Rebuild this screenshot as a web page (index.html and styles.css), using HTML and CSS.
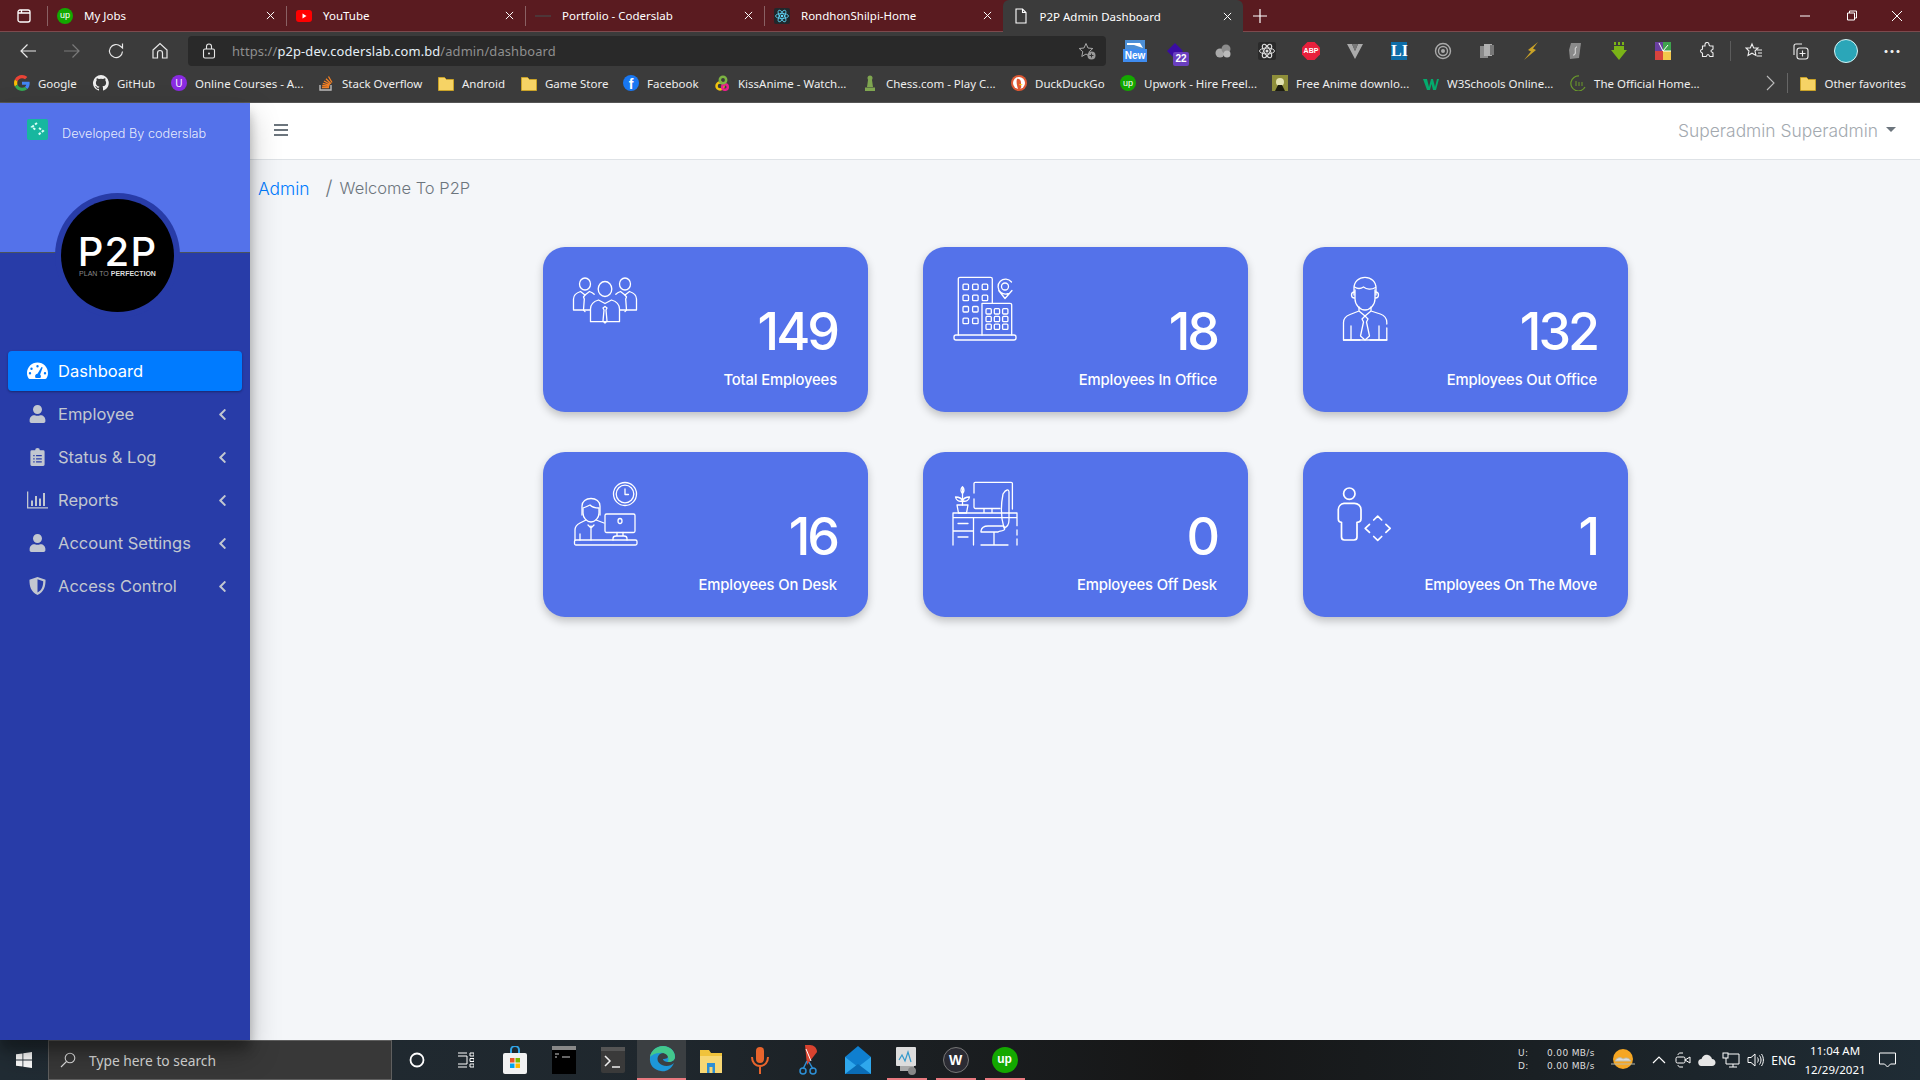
FILE: index.html
```html
<!DOCTYPE html>
<html lang="en">
	<head>
		<meta charset="UTF-8">
		<title>P2P Admin Dashboard</title>
		<link rel="stylesheet" href="styles.css">
	</head>
	<body>
		<svg class="defs" width="0" height="0">
			<symbol id="i_user" viewBox="0 0 448 512"><path fill="currentColor" d="M224 256c70.7 0 128-57.3 128-128S294.7 0 224 0 96 57.3 96 128s57.3 128 128 128zm89.6 32h-16.7c-22.2 10.2-46.9 16-72.9 16s-50.6-5.8-72.9-16h-16.7C60.2 288 0 348.2 0 422.4V464c0 26.5 21.5 48 48 48h352c26.5 0 48-21.5 48-48v-41.6c0-74.2-60.2-134.4-134.4-134.4z"/></symbol>
			<symbol id="i_left" viewBox="0 0 320 512"><path fill="currentColor" d="M34.52 239.03L228.87 44.69c9.37-9.37 24.57-9.37 33.94 0l22.67 22.67c9.36 9.36 9.37 24.52.04 33.9L131.49 256l154.02 154.75c9.34 9.38 9.32 24.54-.04 33.9l-22.67 22.67c-9.37 9.37-24.57 9.37-33.94 0L34.52 272.97c-9.37-9.37-9.37-24.57 0-33.94z"/></symbol>
			<symbol id="i_close" viewBox="0 0 10 10"><path d="M1 1l8 8M9 1l-8 8" fill="none" stroke="currentColor" stroke-width="1.1"/></symbol>
			<symbol id="i_folder" viewBox="0 0 16 16"><path d="M.5 2.500h6l2 2h7v11H.5z" fill="#f6d365" stroke="#c9a227"/></symbol>
		</svg>

		<!-- browser tabs -->
		<div class="tabbar">
			<div class="tab_app">
				<svg width="14" height="14" viewBox="0 0 14 14"><rect x="1" y="1" width="12" height="12" rx="2" fill="none" stroke="#fff" stroke-width="1.3"/><path d="M1 4h12M4.500 1v3" stroke="#fff" stroke-width="1.3"/></svg>
			</div>
			<div class="tab">
				<span class="fav fav_up">up</span><span class="tab_name">My Jobs</span>
				<svg class="tab_x"><use href="#i_close"/></svg>
			</div>
			<div class="tab">
				<svg class="fav" viewBox="0 0 16 16"><rect y="2" width="16" height="12" rx="3" fill="#f00"/><path d="M6.500 5.500v5l4-2.500z" fill="#fff"/></svg>
				<span class="tab_name">YouTube</span>
				<svg class="tab_x"><use href="#i_close"/></svg>
			</div>
			<div class="tab">
				<svg class="fav" viewBox="0 0 16 16"><path d="M0 8h16" stroke="#4a4040" stroke-width="1.5"/></svg>
				<span class="tab_name">Portfolio - Coderslab</span>
				<svg class="tab_x"><use href="#i_close"/></svg>
			</div>
			<div class="tab tab_before">
				<svg class="fav" viewBox="0 0 16 16"><rect width="16" height="16" rx="2" fill="#20282c"/><g fill="none" stroke="#61dafb" stroke-width=".8"><ellipse cx="8" cy="8" rx="6.500" ry="2.500"/><ellipse cx="8" cy="8" rx="6.500" ry="2.500" transform="rotate(60 8 8)"/><ellipse cx="8" cy="8" rx="6.500" ry="2.500" transform="rotate(120 8 8)"/></g><circle cx="8" cy="8" r="1.3" fill="#61dafb"/></svg>
				<span class="tab_name">RondhonShilpi-Home</span>
				<svg class="tab_x"><use href="#i_close"/></svg>
			</div>
			<div class="tab tab_active">
				<svg class="fav" viewBox="0 0 16 16"><path d="M3 1h6.500L13 4.500V15H3zM9.500 1v3.500H13" fill="none" stroke="#fff" stroke-width="1.1"/></svg>
				<span class="tab_name">P2P Admin Dashboard</span>
				<svg class="tab_x"><use href="#i_close"/></svg>
			</div>
			<svg class="tab_plus" width="16" height="16" viewBox="0 0 16 16"><path d="M8 1v14M1 8h14" stroke="#fff" stroke-width="1.2"/></svg>
			<div class="win_btns">
				<svg width="46" height="12" viewBox="0 0 46 12"><path d="M18 6h10" stroke="#fff"/></svg>
				<svg width="46" height="12" viewBox="0 0 46 12"><path d="M19.500 3h7v7h-7zM21.500 3V1h7v7h-2" fill="none" stroke="#fff"/></svg>
				<svg width="46" height="12" viewBox="0 0 46 12"><path d="M18 1l10 10M28 1L18 11" stroke="#fff"/></svg>
			</div>
		</div>

		<!-- address row -->
		<div class="toolbar">
			<div class="tool"><svg width="18" height="18" viewBox="0 0 18 18"><path d="M17 9H2M8.500 2.500L2 9l6.500 6.500" fill="none" stroke="#e8e8e8" stroke-width="1.2"/></svg></div>
			<div class="tool"><svg width="18" height="18" viewBox="0 0 18 18"><path d="M1 9h15M9.500 2.500L16 9l-6.500 6.500" fill="none" stroke="#7a7a7a" stroke-width="1.2"/></svg></div>
			<div class="tool"><svg width="18" height="18" viewBox="0 0 18 18"><path d="M15.500 9.500a6.500 6.500 0 1 1-2-5.200L15.500 6V1.500" fill="none" stroke="#e8e8e8" stroke-width="1.2"/></svg></div>
			<div class="tool"><svg width="18" height="18" viewBox="0 0 18 18"><path d="M2 8l7-6.500L16 8v8h-4.500v-5a2.500 2.500 0 0 0-5 0v5H2z" fill="none" stroke="#e8e8e8" stroke-width="1.2"/></svg></div>
			<div class="address">
				<svg class="lock" width="14" height="16" viewBox="0 0 14 16"><rect x="1.500" y="6" width="11" height="9" rx="1.5" fill="none" stroke="#e8e8e8" stroke-width="1.1"/><path d="M4.500 6V3.500a2.500 2.500 0 0 1 5 0V6" fill="none" stroke="#e8e8e8" stroke-width="1.1"/><circle cx="7" cy="10.500" r="1" fill="#e8e8e8"/></svg>
				<span class="url"><span class="url_dim">https://</span><span class="url_host">p2p-dev.coderslab.com.bd</span><span class="url_dim">/admin/dashboard</span></span>
				<svg class="addr_star" width="18" height="18" viewBox="0 0 18 18"><path d="M8 1.500l2 4.500 4.800.5-3.600 3.200 1 4.800L8 12l-4.200 2.500 1-4.800L1.200 6.500 6 6z" fill="none" stroke="#aaa"/><circle cx="13.500" cy="13.500" r="4" fill="#999"/><path d="M13.500 11.500v4M11.500 13.500h4" stroke="#333"/></svg>
			</div>
			<div class="exts">
				<div class="tool">
					<span class="ext_new"><svg width="20" height="11" viewBox="0 0 20 11"><rect width="20" height="11" fill="#4c8fd6"/><path d="M2 3h13l3 5-9-3H2z" fill="#fff"/></svg><b>New</b></span>
				</div>
				<div class="tool">
					<span class="ext_count"><svg width="16" height="16" viewBox="0 0 16 16"><path d="M8 0l8 8-8 8-8-8z" fill="#3a0ca3"/></svg><b>22</b></span>
				</div>
				<div class="tool"><svg width="18" height="16" viewBox="0 0 18 16"><circle cx="6" cy="10" r="4.500" fill="#aaa"/><circle cx="12" cy="6" r="4.500" fill="#8c8c8c"/><circle cx="13" cy="11" r="3.500" fill="#bbb"/></svg></div>
				<div class="tool"><svg width="18" height="18" viewBox="0 0 18 18"><rect width="18" height="18" rx="2" fill="#2a2a2a"/><g fill="none" stroke="#ddd"><ellipse cx="9" cy="9" rx="7.500" ry="3"/><ellipse cx="9" cy="9" rx="7.500" ry="3" transform="rotate(60 9 9)"/><ellipse cx="9" cy="9" rx="7.500" ry="3" transform="rotate(120 9 9)"/></g><circle cx="9" cy="9" r="1.5" fill="#ddd"/></svg></div>
				<div class="tool"><span class="ext_abp">ABP</span></div>
				<div class="tool"><svg width="16" height="16" viewBox="0 0 16 16"><path d="M0 1h5l3 7 3-7h5L8 16z" fill="#aaa"/><path d="M5 1l3 7 3-7" fill="#777"/></svg></div>
				<div class="tool"><span class="ext_li">LI</span></div>
				<div class="tool"><svg width="18" height="18" viewBox="0 0 18 18"><g fill="none" stroke="#aaa"><circle cx="9" cy="9" r="7.500" stroke-width="1.4"/><circle cx="9" cy="9" r="4.500" stroke-width="1.4"/></g><circle cx="9" cy="9" r="2" fill="#aaa"/></svg></div>
				<div class="tool"><svg width="16" height="16" viewBox="0 0 16 16"><rect x="1" y="3" width="8" height="12" fill="#8a8a8a"/><rect x="5" y="1" width="8" height="12" fill="#b0b0b0"/><rect x="11" y="2" width="4" height="10" fill="#777"/></svg></div>
				<div class="tool"><svg width="14" height="18" viewBox="0 0 14 18"><path d="M14 0L4 8l3 1.500L0 18l12-10-3-1.500z" fill="#c9a227"/></svg></div>
				<div class="tool"><svg width="14" height="18" viewBox="0 0 14 18"><path d="M3 1h10l-2 15-9 1-1-9z" fill="#8a8a8a"/><path d="M9 5C6 5 8 9 7 12c-.3 1-1 1-2 1" fill="none" stroke="#eee"/></svg></div>
				<div class="tool"><svg width="16" height="18" viewBox="0 0 16 18"><path d="M3 0h2v3H3zM7 0h2v3H7zM11 0h2v3h-2zM3 4h10v4h3l-8 10L0 8h3z" fill="#7ab317"/></svg></div>
				<div class="tool"><svg width="16" height="18" viewBox="0 0 16 18"><rect width="8" height="9" fill="#6a3fa0"/><rect x="8" width="8" height="9" fill="#3fa34d"/><rect y="9" width="8" height="9" fill="#d9433d"/><rect x="8" y="9" width="8" height="9" fill="#f3c64b"/><path d="M8 9L4 1M8 9l5-6M8 9h8" stroke="#fff"/></svg></div>
				<div class="tool"><svg width="18" height="18" viewBox="0 0 18 18"><path d="M7 2.500a2 2 0 0 1 4 0c0 1 .5 1.500 1.500 1.500H15v3c0 1-2 .5-2 2s2 1 2 2v3.500h-3c-1 0-.5-2-2-2s-1 2-2 2H4.500v-3c0-1-2-.5-2-2.500s2-1 2-2V4H7z" fill="none" stroke="#eee" stroke-width="1.1"/></svg></div>
				<span class="tool_sep"></span>
				<div class="tool"><svg width="18" height="18" viewBox="0 0 18 18"><path d="M7 2l1.700 4h4.300l-3 3 1 4.500L7 11.200 3 13.500 4 9 1 6h4.300z" fill="none" stroke="#eee" stroke-width="1.1"/><path d="M12 8h5M13 11h4M12 14h5" stroke="#eee" stroke-width="1.1"/></svg></div>
				<div class="tool tool_shift"><svg width="18" height="18" viewBox="0 0 18 18"><path d="M3 13V4a2 2 0 0 1 2-2h6" fill="none" stroke="#eee" stroke-width="1.1"/><rect x="6" y="6" width="11" height="11" rx="2.5" fill="none" stroke="#eee" stroke-width="1.1"/><path d="M11.500 8.500v6M8.500 11.500h6" stroke="#eee" stroke-width="1.1"/></svg></div>
				<div class="tool tool_shift"><span class="avatar"></span></div>
				<div class="tool tool_dots">···</div>
			</div>
		</div>

		<!-- favourites row -->
		<div class="bookmarks">
			<div class="mark"><svg class="mark_ic" viewBox="0 0 48 48"><path fill="#EA4335" d="M24 9.500c3.540 0 6.710 1.220 9.210 3.600l6.850-6.850C35.900 2.380 30.470 0 24 0 14.620 0 6.510 5.380 2.560 13.220l7.980 6.190C12.430 13.720 17.740 9.500 24 9.500z"/><path fill="#4285F4" d="M46.980 24.550c0-1.570-.15-3.090-.38-4.550H24v9.020h12.940c-.58 2.960-2.260 5.480-4.780 7.180l7.730 6c4.510-4.180 7.090-10.360 7.090-17.650z"/><path fill="#FBBC05" d="M10.530 28.590c-.48-1.450-.76-2.990-.76-4.590s.27-3.140.76-4.590l-7.980-6.190C.92 16.460 0 20.120 0 24c0 3.880.92 7.540 2.560 10.780l7.970-6.190z"/><path fill="#34A853" d="M24 48c6.480 0 11.930-2.130 15.890-5.810l-7.730-6c-2.150 1.450-4.920 2.300-8.160 2.300-6.260 0-11.570-4.220-13.470-9.910l-7.980 6.190C6.510 42.620 14.620 48 24 48z"/></svg>Google</div>
			<div class="mark"><svg class="mark_ic" viewBox="0 0 16 16"><path fill="#eee" d="M8 0a8 8 0 0 0-2.500 15.600c.4.100.5-.2.500-.4v-1.400c-2.200.5-2.700-1-2.700-1-.4-.9-.9-1.200-.9-1.200-.7-.5.100-.5.100-.5.800.1 1.200.8 1.200.8.700 1.200 1.900.9 2.300.7.100-.5.300-.9.500-1.100-1.800-.2-3.600-.9-3.600-4 0-.9.300-1.600.8-2.100-.1-.2-.4-1 .1-2.100 0 0 .7-.2 2.200.8a7.500 7.500 0 0 1 4 0c1.500-1 2.200-.8 2.200-.8.400 1.100.2 1.900.1 2.100.5.600.8 1.300.8 2.100 0 3.100-1.900 3.700-3.700 3.900.3.300.6.800.6 1.500v2.200c0 .2.100.5.600.4A8 8 0 0 0 8 0z"/></svg>GitHub</div>
			<div class="mark"><span class="mark_ic ic_udemy">U</span>Online Courses - A...</div>
			<div class="mark"><svg class="mark_ic" viewBox="0 0 16 16"><path d="M2 10v5h11v-5" fill="none" stroke="#bcbbbb" stroke-width="1.4"/><path d="M4 12.500h7M4.200 10.500l7 .6M4.800 8.300l6.800 1.800M6 6l6 3.300M8 3.700l5 5M10.500 1.500l3.500 6" stroke="#f48024" stroke-width="1.3"/></svg>Stack Overflow</div>
			<div class="mark"><svg class="mark_ic"><use href="#i_folder"/></svg>Android</div>
			<div class="mark"><svg class="mark_ic"><use href="#i_folder"/></svg>Game Store</div>
			<div class="mark"><span class="mark_ic ic_fb">f</span>Facebook</div>
			<div class="mark"><svg class="mark_ic" viewBox="0 0 16 16"><g fill="none" stroke-width="2.5"><circle cx="6" cy="11" r="3.500" stroke="#f1c40f"/><circle cx="11" cy="12" r="2.800" stroke="#e91e8c"/><circle cx="9" cy="5" r="3.200" stroke="#7cb342"/></g></svg>KissAnime - Watch...</div>
			<div class="mark"><svg class="mark_ic" viewBox="0 0 16 16"><circle cx="8" cy="3" r="2.500" fill="#7fa650"/><path d="M6 5h4l1 7H5zM3 12.500h10V16H3z" fill="#7fa650"/></svg>Chess.com - Play C...</div>
			<div class="mark"><svg class="mark_ic" viewBox="0 0 16 16"><circle cx="8" cy="8" r="8" fill="#de5833"/><circle cx="8" cy="8" r="6" fill="#fff"/><path d="M6 4c3-1 4 2 4 4s1 5-1 6H7C6 11 5 7 6 4z" fill="#de5833"/><path d="M8 9h4l-3 1.500z" fill="#fdd20a"/></svg>DuckDuckGo</div>
			<div class="mark"><span class="mark_ic fav_up">up</span>Upwork - Hire Freel...</div>
			<div class="mark"><svg class="mark_ic" viewBox="0 0 16 16"><rect width="16" height="16" fill="#8f8f3a"/><circle cx="8" cy="7" r="4" fill="#e3e3b0"/><path d="M3 16l3-6h4l3 6z" fill="#1c1c10"/></svg>Free Anime downlo...</div>
			<div class="mark"><svg class="mark_ic" viewBox="0 0 16 16"><path d="M0 4h4l2 8 2-8h2l2 8 2-8h2l-3 11h-3L8.500 9 7 15H4z" fill="#04aa6d"/></svg>W3Schools Online...</div>
			<div class="mark"><svg class="mark_ic" viewBox="0 0 16 16"><path d="M9 1a7.500 7.500 0 1 0 6 11" fill="none" stroke="#6a9a2b" stroke-width="1.2"/><path d="M6 6v5M9 7v4M12 7v4" stroke="#6a9a2b"/></svg>The Official Home...</div>
			<div class="mark_end">
				<svg width="9" height="16" viewBox="0 0 9 16"><path d="M1 1l7 7-7 7" fill="none" stroke="#bbb" stroke-width="1.1"/></svg>
				<span class="mark_sep"></span>
				<div class="mark"><svg class="mark_ic"><use href="#i_folder"/></svg>Other favorites</div>
			</div>
		</div>

		<div class="app">
			<aside class="sidebar">
				<div class="brand">
					<svg class="brand_ic" viewBox="0 0 21 21"><rect width="21" height="21" rx="2" fill="#17b79f"/><path d="M10 4L5 8l4 3M12 9l4 3-5 4" fill="none" stroke="#d8fff6" stroke-width="2" stroke-dasharray="2.500 1.500"/></svg>
					<span class="brand_text">Developed By coderslab</span>
				</div>
				<div class="logo">
					<div class="logo_in">
						<span class="logo_big">P2P</span>
						<span class="logo_small">PLAN TO <b>PERFECTION</b></span>
					</div>
				</div>
				<ul class="nav">
					<li class="nav_item active">
						<svg class="nav_ic" viewBox="0 0 21 17"><path fill="#fff" fill-rule="evenodd" d="M10.500 0C4.700 0 0 4.700 0 10.500c0 1.900.5 3.800 1.500 5.300.3.500.8.700 1.300.7h15.400c.5 0 1-.2 1.300-.7 1-1.500 1.500-3.400 1.500-5.300C21 4.700 16.300 0 10.500 0zM10.500 2.500a1.200 1.200 0 1 1 0 2.400 1.200 1.200 0 0 1 0-2.400zM4.500 5a1.200 1.200 0 1 1 0 2.400A1.200 1.200 0 0 1 4.500 5zM3 9.500a1.200 1.200 0 1 1 0 2.400 1.200 1.200 0 0 1 0-2.400zM18 9.500a1.200 1.200 0 1 1 0 2.400 1.200 1.200 0 0 1 0-2.400zM14.500 4.500l1.200.4-2.600 7c.5.500.8 1.100.8 1.800 0 .7-.2 1.300-.6 1.800H8.700c-.4-.5-.6-1.100-.6-1.800 0-1.300 1.100-2.400 2.400-2.400z"/></svg>
						<span>Dashboard</span>
					</li>
					<li class="nav_item">
						<svg class="nav_ic"><use href="#i_user"/></svg>
						<span>Employee</span>
						<svg class="nav_arrow"><use href="#i_left"/></svg>
					</li>
					<li class="nav_item">
						<svg class="nav_ic" viewBox="0 0 21 19"><path fill="currentColor" fill-rule="evenodd" d="M4.500 2.500H8a2.500 2.500 0 0 1 5 0h3.500a1.500 1.500 0 0 1 1.500 1.500v13.500a1.500 1.500 0 0 1-1.500 1.500h-12A1.500 1.500 0 0 1 3 17.500V4a1.500 1.500 0 0 1 1.500-1.500zM6 7.500v1.300h1.500V7.500zM9 7.500v1.300h6V7.500zM6 10.800v1.300h1.500v-1.300zM9 10.800v1.300h6v-1.300zM6 14v1.300h1.500V14zM9 14v1.300h6V14z"/></svg>
						<span>Status &amp; Log</span>
						<svg class="nav_arrow"><use href="#i_left"/></svg>
					</li>
					<li class="nav_item">
						<svg class="nav_ic" viewBox="0 0 21 17"><path fill="currentColor" d="M0 0h1.300v15.700H21V17H0zM4 9h2v5.500H4zM8 4.500h2v10H8zM12 7h2v7.500h-2zM16 1.500h2v13h-2z"/></svg>
						<span>Reports</span>
						<svg class="nav_arrow"><use href="#i_left"/></svg>
					</li>
					<li class="nav_item">
						<svg class="nav_ic"><use href="#i_user"/></svg>
						<span>Account Settings</span>
						<svg class="nav_arrow"><use href="#i_left"/></svg>
					</li>
					<li class="nav_item">
						<svg class="nav_ic" viewBox="0 0 21 19"><path fill="currentColor" fill-rule="evenodd" d="M10.500 0l8.500 3c0 7-1.500 13-8.500 16C3.500 16 2 10 2 3zM10.500 2.500V16.300c4.800-2.400 6-6.800 6-11.800z"/></svg>
						<span>Access Control</span>
						<svg class="nav_arrow"><use href="#i_left"/></svg>
					</li>
				</ul>
			</aside>

			<main class="main">
				<header class="topbar">
					<svg class="burger" width="14" height="12" viewBox="0 0 14 12"><path d="M0 1h14M0 6h14M0 11h14" stroke="#6c757d" stroke-width="2"/></svg>
					<span class="user">Superadmin Superadmin</span>
					<span class="caret"></span>
				</header>
				<div class="crumbs">
					<a class="crumb_link" href="javascript:;">Admin</a>
					<span class="crumb_sep">/</span>
					<span class="crumb_now">Welcome To P2P</span>
				</div>
				<div class="cards">
					<div class="card">
						<svg class="card_ic" viewBox="0 0 72 72">
							<ellipse cx="15" cy="10" rx="5.500" ry="6"/><ellipse cx="55" cy="10" rx="5.500" ry="6"/><ellipse cx="35" cy="15" rx="6.800" ry="7.500"/>
							<path d="M20 36H3.500V25c0-4 2.500-6 7-7.500l4.500 3.500 4.500-3.500c2 .7 3.500 1.500 4.700 2.700"/>
							<path d="M50 36h16.500V25c0-4-2.500-6-7-7.500L55 21l-4.500-3.500c-2 .7-3.500 1.500-4.700 2.700"/>
							<path d="M20.500 47.700V35c0-4.500 3-7.500 8-9l6.500 3.500 6.500-3.500c5 1.500 8 4.500 8 9v12.700z"/>
							<path d="M35 32.500l-2 1.500 1 2-1 11 2 2 2-2-1-11 1-2zM15 21l-1.500 2 .8 2-.8 11 1.500 1.500M55 21l1.500 2-.8 2 .8 11-1.500 1.500"/>
						</svg>
						<div class="card_num">149</div>
						<div class="card_label">Total Employees</div>
					</div>
					<div class="card">
						<svg class="card_ic" viewBox="0 0 72 72">
							<path d="M8.300 61V5a1.700 1.700 0 0 1 1.700-1.700h30.600A1.700 1.700 0 0 1 42.300 5v24.300M32 29.300h28a1.700 1.700 0 0 1 1.700 1.700v30M32 29.300V61"/>
							<rect x="4" y="61" width="62" height="5" rx="2"/>
							<rect x="13" y="10.200" width="5.500" height="5.500" rx="1"/><rect x="22.600" y="10.200" width="5.500" height="5.500" rx="1"/><rect x="32.200" y="10.200" width="5.500" height="5.500" rx="1"/>
							<rect x="13" y="21.200" width="5.500" height="5.500" rx="1"/><rect x="22.600" y="21.200" width="5.500" height="5.500" rx="1"/><rect x="32.200" y="21.200" width="5.500" height="5.500" rx="1"/>
							<rect x="13" y="32.500" width="5.500" height="5.500" rx="1"/><rect x="22.600" y="32.500" width="5.500" height="5.500" rx="1"/>
							<rect x="13" y="44.200" width="5.500" height="5.500" rx="1"/><rect x="22.600" y="44.200" width="5.500" height="5.500" rx="1"/>
							<rect x="36" y="34.700" width="5.300" height="5.300" rx="1"/><rect x="44.300" y="34.700" width="5.300" height="5.300" rx="1"/><rect x="52.600" y="34.700" width="5.300" height="5.300" rx="1"/>
							<rect x="36" y="42.400" width="5.300" height="5.300" rx="1"/><rect x="44.300" y="42.400" width="5.300" height="5.300" rx="1"/><rect x="52.600" y="42.400" width="5.300" height="5.300" rx="1"/>
							<rect x="36" y="50.100" width="5.300" height="5.300" rx="1"/><rect x="44.300" y="50.100" width="5.300" height="5.300" rx="1"/><rect x="52.600" y="50.100" width="5.300" height="5.300" rx="1"/>
							<path d="M61.500 8a7.500 7.500 0 1 0 .5 8.500L55 24.500l-6.300-8"/><circle cx="55" cy="12.500" r="3.500"/>
						</svg>
						<div class="card_num">18</div>
						<div class="card_label">Employees In Office</div>
					</div>
					<div class="card">
						<svg class="card_ic" viewBox="0 0 72 72">
							<path d="M24 21V14C24 7.500 29 3.300 35 3.300S46 7.500 46 14v7"/>
							<path d="M24.500 13c3 2 6 2 9 0 3 2.500 8 3 12 .5M25 16v9c0 6 5 11 10 11s10-5 10-11v-9"/>
							<path d="M24.500 18a3 3 0 0 0 0 6M45.500 18a3 3 0 0 1 0 6"/>
							<path d="M29 33v4l6 5 6-5v-4M29 37l-9 3.500c-4 1.500-6.500 4-6.500 8V66h43.300V54M56.800 50v-1.500c0-4-2.500-7-6.500-8.500L41 37"/>
							<path d="M35 42l-3 3 1.500 3-3 14 4.500 4 4.500-4-3-14 1.500-3zM21 52v14M49 52v14M13.500 66H30M40 66h16.800"/>
						</svg>
						<div class="card_num">132</div>
						<div class="card_label">Employees Out Office</div>
					</div>
					<div class="card">
						<svg class="card_ic" viewBox="0 0 72 72">
							<circle cx="55" cy="15" r="11.500"/><circle cx="55" cy="15" r="8.800"/><path d="M55 10v5.500h3.500"/>
							<path d="M12 36v-9c0-4.500 4-7.500 9-7.500s9 3 9 7.500v9"/>
							<path d="M13 30v4c0 5 4 9 8 9s8-4 8-9v-4M13 29c3-1 5-2 7-3 2 2 5 3 9 3"/>
							<path d="M16 41l-6 3c-3 1.500-5 3.500-5 7v10M26 41l8 3M21 47v14M18 46l3 3 3-3M10 55v6"/>
							<rect x="35" y="35" width="30" height="18.500" rx="1.5"/><ellipse cx="50" cy="42" rx="2" ry="2.500"/>
							<path d="M47 53.500V57h6v-3.500M43 61v-1.500c0-1 1-2.500 3-2.500h8c2 0 3 1.500 3 2.500V61"/>
							<rect x="4.500" y="61" width="62.500" height="5" rx="1.5"/>
						</svg>
						<div class="card_num">16</div>
						<div class="card_label">Employees On Desk</div>
					</div>
					<div class="card">
						<svg class="card_ic" viewBox="0 0 72 72">
							<path d="M24 14V4.500a1.200 1.200 0 0 1 1.200-1.200h36a1.200 1.200 0 0 1 1.200 1.200V30M24 20v8a1.500 1.500 0 0 0 1.500 1.500H50"/>
							<path d="M34 30v4M42 30v4M3 34h64v4.700H3zM3 38.700V66M23.500 38.700V66M3 52h20.500M67 38.700v8M67 51v5M67 60v6"/>
							<path d="M8 44.500h10M8 58h10"/>
							<path d="M12.500 26v-16M12.500 7.700c-2 2-2 5 0 7 2-2 2-5 0-7zM12.500 22c-1-3-4-4-7-4 .5 3 3 5 7 4zM12.500 22c1-3 4-4 7-4-.5 3-3 5-7 4z"/>
							<path d="M7 26h11l-1.500 8h-8z"/>
							<path d="M53 15c3-5 6-5 6-2v28c0 4-2 7-5 8V49c-3-10-3-24-1-34z"/>
							<path d="M31 52c.5-3 3-5 7-5h15c1.500 0 2.500 3 1 4-3 1.500-5 1-6 2H31zM44 53v13M31 66h27"/>
						</svg>
						<div class="card_num">0</div>
						<div class="card_label">Employees Off Desk</div>
					</div>
					<div class="card">
						<svg class="card_ic card_ic_bold" viewBox="0 0 72 72">
							<circle cx="19.300" cy="14.700" r="5.700"/>
							<path d="M14 24.300h10.500a6.500 6.500 0 0 1 6.500 6.500v9c0 2-1.500 3.500-4 3.500v14.700a3 3 0 0 1-3 3H14.500a3 3 0 0 1-3-3V43.300c-2 0-3.200-1.500-3.200-3.500v-9a6.500 6.500 0 0 1 5.700-6.500z"/>
							<path d="M43.700 41l4-3.800 4 3.800M43.700 57.500l4 3.800 4-3.800M39.500 45.300l-4.300 4 4.300 4M55.900 45.300l4.300 4-4.300 4"/>
						</svg>
						<div class="card_num">1</div>
						<div class="card_label">Employees On The Move</div>
					</div>
				</div>
			</main>
		</div>

		<!-- windows taskbar -->
		<footer class="taskbar">
			<div class="start">
				<svg width="16" height="16" viewBox="0 0 16 16"><path d="M0 2.300l6.500-.9V7.600H0zM7.300 1.300L16 0v7.600H7.300zM0 8.400h6.500v6.200L0 13.700zM7.300 8.400H16V16l-8.700-1.200z" fill="#fff"/></svg>
			</div>
			<div class="search">
				<svg width="16" height="16" viewBox="0 0 16 16"><circle cx="10" cy="6" r="4.800" fill="none" stroke="#ddd" stroke-width="1.1"/><path d="M6.500 9.500L1 15" stroke="#ddd" stroke-width="1.1"/></svg>
				<span>Type here to search</span>
			</div>
			<div class="task"><svg width="16" height="16" viewBox="0 0 16 16"><circle cx="8" cy="8" r="6.500" fill="none" stroke="#fff" stroke-width="1.8"/></svg></div>
			<div class="task"><svg width="16" height="16" viewBox="0 0 16 16"><path d="M0 1h9M0 15h9M0 4h9v8H0M12 1h4v3h-4zM12 6.500h4v3h-4zM12 12h4v3h-4z" fill="none" stroke="#fff"/></svg></div>
			<div class="task"><svg width="24" height="28" viewBox="0 0 24 28"><path d="M8 8V4a4 4 0 0 1 8 0v4" fill="none" stroke="#30a5e8" stroke-width="2"/><rect y="7" width="24" height="21" rx="2" fill="#f2f2f2"/><rect x="7" y="12" width="4.500" height="4.500" fill="#e8552b"/><rect x="12.500" y="12" width="4.500" height="4.500" fill="#7fba00"/><rect x="7" y="17.500" width="4.500" height="4.500" fill="#00a4ef"/><rect x="12.500" y="17.500" width="4.500" height="4.500" fill="#ffb900"/></svg></div>
			<div class="task"><svg width="24" height="28" viewBox="0 0 24 28"><rect width="24" height="28" fill="#000"/><rect width="24" height="4" fill="#888"/><path d="M3 8h4M3 11h2M10 11h8" stroke="#ccc"/></svg></div>
			<div class="task"><svg width="24" height="26" viewBox="0 0 24 26"><rect width="24" height="26" rx="2" fill="#3a3a3a"/><rect width="24" height="4" fill="#555"/><path d="M4 9l5 5-5 5M11 20h8" fill="none" stroke="#eee" stroke-width="1.5"/></svg></div>
			<div class="task task_on"><svg width="28" height="28" viewBox="0 0 28 28"><path d="M26 18c-3 7-9 9-13 8C6 25 1 20 2 12 3 6 8 1 15 1c7 0 12 5 12 11 0 3-3 5-7 5-2 0-5-1-5-3 3 0 6-1 5-4-1-2-5-3-8-1-4 3-3 9 2 11 4 2 9 1 12-2z" fill="#1d97d8"/><path d="M2 12C3 6 8 1 15 1c7 0 12 5 12 11 0 3-3 5-7 5 2-6-3-10-8-9-5 0-8 2-10 4z" fill="#43c88c"/></svg></div>
			<div class="task"><svg width="24" height="26" viewBox="0 0 24 26"><path d="M1 3h9l2 3h11v8H1z" fill="#f0c33c"/><rect x="1" y="9" width="22" height="17" fill="#f7d774"/><rect x="8" y="16" width="8" height="10" fill="#2d8fd5"/><rect x="10.500" y="20" width="3" height="6" fill="#f7d774"/></svg></div>
			<div class="task"><svg width="20" height="28" viewBox="0 0 20 28"><rect x="6" y="1" width="8" height="16" rx="4" fill="#e8642c"/><path d="M2 11c0 5 3 9 8 9s8-4 8-9M10 20v8" fill="none" stroke="#e8642c" stroke-width="2"/></svg></div>
			<div class="task"><svg width="20" height="30" viewBox="0 0 20 30"><path d="M6 0h5c4 0 7 3 7 7L8 20z" fill="#d9432f"/><path d="M7 4l5 12" stroke="#fff"/><path d="M8 16L4 24M10 17l4 7" stroke="#2d8fd5" stroke-width="1.5"/><circle cx="4" cy="26" r="3" fill="none" stroke="#2d8fd5" stroke-width="1.5"/><circle cx="14" cy="26" r="3" fill="none" stroke="#2d8fd5" stroke-width="1.5"/></svg></div>
			<div class="task"><svg width="26" height="28" viewBox="0 0 26 28"><path d="M13 0l13 11v17H0V11z" fill="#0f7fd0"/><path d="M0 11l13 10 13-10v17H0z" fill="#2fa7ec"/><path d="M0 28l13-10 13 10z" fill="#0a6cb6"/></svg></div>
			<div class="task task_open"><svg width="26" height="30" viewBox="0 0 26 30"><rect x="2" y="2" width="20" height="19" rx="1" fill="#ddd"/><path d="M5 15l3-5 3 6 3-9 3 10" fill="none" stroke="#39c" stroke-width="1.2"/><rect x="6" y="21" width="14" height="5" fill="#aaa"/><circle cx="18" cy="26" r="4" fill="#888"/></svg></div>
			<div class="task task_open"><span class="ic_w">W</span></div>
			<div class="task task_open"><span class="ic_up">up</span></div>

			<div class="tray">
				<div class="netspeed">
					<span>U:</span><span>0.00 MB/s</span>
					<span>D:</span><span>0.00 MB/s</span>
				</div>
				<svg class="tray_weather" width="24" height="24" viewBox="0 0 24 24"><circle cx="12" cy="11" r="10" fill="#f5a623"/><path d="M0 16h24M4 13c2-4 6-4 8-2 3-2 6-1 8 2z" fill="#ddd" stroke="#bba"/></svg>
				<div class="tray_ic"><svg width="14" height="8" viewBox="0 0 14 8"><path d="M1 7l6-6 6 6" fill="none" stroke="#fff" stroke-width="1.2"/></svg></div>
				<div class="tray_ic"><svg width="16" height="16" viewBox="0 0 16 16"><path d="M3 3c0-1 1-2 2-2h3M3 13c0 1 1 2 2 2h3" fill="none" stroke="#fff"/><rect x="1" y="5" width="9" height="6" rx="1.5" fill="none" stroke="#fff"/><path d="M10 8l5-3v6z" fill="none" stroke="#fff"/></svg></div>
				<div class="tray_ic"><svg width="18" height="12" viewBox="0 0 18 12"><path d="M4 12a3.500 3.500 0 0 1-.5-7C4.500 2 7 0 10 1c2 .5 3.500 2 4 4 2 .2 3.500 1.500 3.500 3.500S16 12 14 12z" fill="#e6e6e6"/></svg></div>
				<div class="tray_ic"><svg width="18" height="16" viewBox="0 0 18 16"><path d="M4 2h13v10H4zM7 15h8M11 12v3" fill="none" stroke="#fff"/><rect x="1" y="1" width="5" height="5" fill="#1f2a33" stroke="#fff"/></svg></div>
				<div class="tray_ic"><svg width="17" height="16" viewBox="0 0 17 16"><path d="M1 5.500h3L8 2v12l-4-3.500H1zM10.500 5.500c1 1.500 1 3.500 0 5M12.500 3.500c2 3 2 6 0 9M14.500 2c2.500 3.500 2.500 8.500 0 12" fill="none" stroke="#fff"/></svg></div>
				<div class="tray_lang">ENG</div>
				<div class="tray_clock">
					<span>11:04 AM</span>
					<span>12/29/2021</span>
				</div>
				<div class="tray_note"><svg width="17" height="16" viewBox="0 0 17 16"><path d="M.5 1h16v11h-5L8.500 15l-3-3h-5z" fill="none" stroke="#fff"/></svg></div>
			</div>
		</footer>
	</body>
</html>
```

FILE: styles.css
```css
* {
	margin: 0;
	padding: 0;
	box-sizing: border-box;
}

html,
body {
	height: 100%;
	overflow: hidden;
}

body {
	display: flex;
	flex-direction: column;
	background-color: #f4f6f9;
	font-family: "Inter", "Liberation Sans", sans-serif;
}

.defs {
	position: absolute;
}

/* browser chrome */
.tabbar {
	display: flex;
	align-items: flex-end;
	height: 32px;
	background-color: #5a1b20;
	border-bottom: 1px solid #7c4a4d;
	font-family: "Noto Sans", "Liberation Sans", sans-serif;
	font-size: 11.5px;
	color: #fff;
}

.tab_app {
	display: flex;
	align-items: center;
	justify-content: center;
	width: 47px;
	height: 31px;
}

.tab {
	position: relative;
	display: flex;
	align-items: center;
	width: 239px;
	height: 31px;
	padding-left: 10px;
}

.tab::before {
	content: "";
	position: absolute;
	left: 0;
	top: 6px;
	width: 1px;
	height: 20px;
	background-color: #8a6164;
}

.tab_before {
	width: 238.5px;
}

.tab_active {
	width: 240px;
	height: 32px;
	margin-bottom: -1px;
	background-color: #3b3b3b;
	border-radius: 6px 6px 0 0;
}

.tab_active::before {
	display: none;
}

.fav {
	flex: none;
	width: 16px;
	height: 16px;
	margin-right: 11px;
}

.fav_up {
	display: flex;
	align-items: center;
	justify-content: center;
	border-radius: 50%;
	background-color: #14a800;
	color: #fff;
	font-family: "Liberation Sans", sans-serif;
	font-size: 9px;
	line-height: 1;
}

.tab_name {
	flex: 1;
	white-space: nowrap;
}

.tab_x {
	width: 9px;
	height: 9px;
	margin-right: 11px;
	color: #fff;
}

.tab_plus {
	margin: 0 0 7px 9px;
}

.win_btns {
	display: flex;
	margin: 0 0 9px auto;
}

.toolbar {
	display: flex;
	align-items: center;
	height: 38px;
	padding: 0 6px;
	background-color: #3b3b3b;
}

.tool {
	flex: none;
	display: flex;
	align-items: center;
	justify-content: center;
	width: 44px;
	height: 30px;
}

.address {
	display: flex;
	align-items: center;
	width: 918px;
	height: 30px;
	margin-left: 6px;
	background-color: #292929;
	border-radius: 4px;
}

.lock {
	margin: 0 16px 0 14px;
}

.url {
	font-family: "Noto Sans", "Liberation Sans", sans-serif;
	font-size: 12.9px;
	letter-spacing: 0.01em;
}

.url_dim {
	color: #8f8f8f;
}

.url_host {
	color: #e6f0f7;
}

.addr_star {
	margin: 0 10px 0 auto;
}

.exts {
	display: flex;
	align-items: center;
	margin-left: 7px;
}

.ext_new,
.ext_count {
	display: flex;
	flex-direction: column;
	align-items: center;
	position: relative;
	font-family: "Liberation Sans", sans-serif;
	font-size: 10px;
	color: #fff;
}

.ext_new b {
	width: 24px;
	margin-top: -2px;
	background-color: #3f8cf0;
	text-align: center;
	line-height: 13px;
}

.ext_count svg {
	margin-right: 8px;
}

.ext_count b {
	position: absolute;
	left: 6px;
	top: 9px;
	width: 16px;
	background-color: #6a3fc0;
	border-radius: 2px;
	text-align: center;
	line-height: 14px;
}

.ext_abp {
	width: 18px;
	height: 18px;
	background-color: #e8203c;
	clip-path: polygon(30% 0, 70% 0, 100% 30%, 100% 70%, 70% 100%, 30% 100%, 0 70%, 0 30%);
	color: #fff;
	font-family: "Liberation Sans", sans-serif;
	font-size: 7px;
	font-weight: 700;
	line-height: 18px;
	text-align: center;
}

.ext_li {
	width: 16px;
	height: 18px;
	background-color: #0e6da8;
	color: #fff;
	font-family: "Liberation Serif", serif;
	font-size: 16px;
	font-weight: 700;
	line-height: 18px;
	text-align: center;
}

.tool_sep {
	width: 1px;
	height: 20px;
	margin: 0 1px;
	background-color: #5c5c5c;
}

.tool_shift {
	margin-left: 2px;
}

.avatar {
	width: 24px;
	height: 24px;
	border-radius: 50%;
	background-color: #2ba6b8;
	border: 1px solid #d5f3f5;
}

.tool_dots {
	margin-left: 2px;
	color: #eee;
	font-size: 18px;
	font-weight: 700;
}

.bookmarks {
	display: grid;
	grid-template-columns: 79px 78px 147px 120px 83px 102px 91px 148px 149px 109px 152px 151px 147px 190px 1fr;
	align-items: center;
	height: 33px;
	padding: 0 0 6px 14px;
	background-color: #3b3b3b;
	border-bottom: 1px solid #555;
	font-family: "Noto Sans", "Liberation Sans", sans-serif;
	font-size: 11.5px;
	color: #eee;
}

.mark {
	display: flex;
	align-items: center;
	white-space: nowrap;
}

.mark_ic {
	flex: none;
	width: 16px;
	height: 16px;
	margin-right: 8px;
}

.ic_udemy {
	border-radius: 50%;
	background-color: #8a2be2;
	color: #fff;
	font-size: 10px;
	line-height: 16px;
	text-align: center;
}

.ic_fb {
	border-radius: 50%;
	background-color: #1877f2;
	color: #fff;
	font-family: "Liberation Sans", sans-serif;
	font-size: 14px;
	font-weight: 700;
	line-height: 18px;
	text-align: center;
}

.mark_end {
	display: flex;
	align-items: center;
	justify-content: flex-end;
	gap: 12px;
	padding-right: 14px;
}

.mark_sep {
	width: 1px;
	height: 20px;
	background-color: #666;
}

/* dashboard */
.app {
	flex: 1;
	display: flex;
	min-height: 0;
}

.sidebar {
	flex: none;
	width: 250px;
	background-color: #283ca8;
	box-shadow: 0 14px 28px rgba(0, 0, 0, 0.25), 0 10px 10px rgba(0, 0, 0, 0.22);
	z-index: 1;
}

.brand {
	display: flex;
	align-items: flex-start;
	height: 150px;
	padding: 16px 0 0 27px;
	background-color: #5472ea;
	border-bottom: 1px solid #4b545c;
}

.brand_ic {
	width: 21px;
	height: 21px;
	margin-right: 14px;
}

.brand_text {
	margin-top: 7px;
	color: rgba(255, 255, 255, 0.88);
	font-size: 12.7px;
	font-weight: 300;
	white-space: nowrap;
}

.logo {
	display: flex;
	align-items: center;
	justify-content: center;
	width: 125px;
	height: 125px;
	margin: -60px 0 0 55px;
	border-radius: 50%;
	background-color: #283ca8;
}

.logo_in {
	display: flex;
	flex-direction: column;
	align-items: center;
	justify-content: center;
	width: 113px;
	height: 113px;
	border-radius: 50%;
	background-color: #000;
	color: #fff;
}

.logo_big {
	font-size: 40px;
	font-weight: 500;
	letter-spacing: 0.03em;
	line-height: 34px;
}

.logo_small {
	margin-top: 1px;
	color: #888;
	font-family: "Liberation Sans", sans-serif;
	font-size: 7px;
	line-height: 7px;
	white-space: nowrap;
}

.logo_small b {
	color: #ddd;
}

.nav {
	display: flex;
	flex-direction: column;
	gap: 3px;
	margin-top: 33px;
	padding: 0 8px;
	list-style: none;
}

.nav_item {
	display: flex;
	align-items: center;
	height: 40px;
	padding: 0 15.5px 0 19px;
	border-radius: 4px;
	color: #c2c7d0;
	font-size: 16.5px;
	font-weight: 400;
}

.nav_item span {
	margin-bottom: 1px;
}

.nav_item.active {
	background-color: #007bff;
	box-shadow: 0 1px 3px rgba(0, 0, 0, 0.12), 0 1px 2px rgba(0, 0, 0, 0.24);
	color: #fff;
}

.nav_ic {
	flex: none;
	width: 21px;
	height: 18px;
	margin-right: 10px;
}

.nav_arrow {
	width: 9px;
	height: 13px;
	margin-left: auto;
}

.main {
	flex: 1;
	min-width: 0;
}

.topbar {
	display: flex;
	align-items: center;
	height: 57px;
	padding: 0 24px;
	background-color: #fff;
	border-bottom: 1px solid #dee2e6;
}

.burger {
	margin-bottom: 3px;
}

.user {
	margin: 0 0 2px auto;
	color: #a3a9af;
	font-size: 17.4px;
	font-weight: 300;
}

.caret {
	margin: 0 0 4px 8px;
	border-top: 5px solid #6c757d;
	border-left: 5px solid transparent;
	border-right: 5px solid transparent;
}

.crumbs {
	display: flex;
	align-items: center;
	height: 56px;
	padding-left: 8px;
	font-size: 16.5px;
	font-weight: 300;
}

.crumb_link {
	color: #007bff;
	font-size: 17.4px;
	text-decoration: none;
}

.crumb_sep {
	margin: 0 7px 0 16px;
	color: #6c757d;
	font-size: 20px;
}

.crumb_now {
	color: #6c757d;
}

.cards {
	display: grid;
	grid-template-columns: repeat(3, 325px);
	gap: 40px 55px;
	margin: 31px 0 0 293px;
}

.card {
	position: relative;
	display: flex;
	flex-direction: column;
	align-items: flex-end;
	height: 165px;
	padding: 53px 31px 0 0;
	border-radius: 22px;
	background-color: #5472ea;
	box-shadow: 0 4px 8px rgba(0, 0, 0, 0.22);
	color: #fff;
}

.card_ic {
	position: absolute;
	left: 27px;
	top: 27px;
	width: 72px;
	height: 72px;
	fill: none;
	stroke: #fff;
	stroke-width: 1.3;
	stroke-linejoin: round;
	stroke-linecap: round;
}

.card_ic_bold {
	stroke-width: 1.7;
}

.card_num {
	font-size: 52px;
	font-weight: 500;
	letter-spacing: -0.058em;
	line-height: 64px;
}

.card_label {
	margin-top: 5px;
	font-size: 14.8px;
	font-weight: 500;
	letter-spacing: -0.01em;
	line-height: 22px;
}

/* windows taskbar */
.taskbar {
	flex: none;
	display: flex;
	align-items: stretch;
	height: 40px;
	background: linear-gradient(90deg, #212c34, #1f272d 35%, #161616 62%, #1a2024 80%, #1f2c35);
	font-family: "Noto Sans", "Liberation Sans", sans-serif;
	color: #fff;
}

.start {
	display: flex;
	align-items: center;
	justify-content: center;
	width: 48px;
}

.search {
	display: flex;
	align-items: center;
	gap: 13px;
	width: 344px;
	padding-left: 11px;
	background-color: #383838;
	border: 1px solid #5f5f5f;
	color: #d8d8d8;
	font-size: 13.8px;
}

.task {
	display: flex;
	align-items: center;
	justify-content: center;
	width: 49px;
}

.task_on {
	background-color: #3b3f42;
	border-bottom: 2px solid #e8797f;
}

.task_open {
	background: linear-gradient(#e8797f, #e8797f) center bottom / 40px 2px no-repeat;
}

.ic_w {
	width: 26px;
	height: 26px;
	border-radius: 50%;
	background-color: #2b2b33;
	border: 1px solid #777;
	font-family: "Liberation Sans", sans-serif;
	font-size: 14px;
	font-weight: 700;
	line-height: 24px;
	text-align: center;
}

.ic_up {
	width: 26px;
	height: 26px;
	border-radius: 50%;
	background-color: #14a800;
	font-family: "Liberation Sans", sans-serif;
	font-size: 12px;
	font-weight: 700;
	line-height: 25px;
	text-align: center;
}

.tray {
	display: flex;
	align-items: center;
	margin-left: auto;
	padding-right: 16px;
}

.netspeed {
	display: grid;
	grid-template-columns: 29px auto;
	width: 87px;
	font-family: "DejaVu Sans", sans-serif;
	font-size: 9px;
	letter-spacing: 0.04em;
	line-height: 13px;
	color: #ddd;
}

.tray_weather {
	margin: 0 12px 0 6px;
}

.tray_ic {
	display: flex;
	align-items: center;
	justify-content: center;
	width: 24px;
}

.tray_lang {
	width: 33px;
	font-size: 12px;
	text-align: center;
}

.tray_clock {
	display: flex;
	flex-direction: column;
	width: 70px;
	font-size: 11.5px;
	line-height: 19px;
	text-align: center;
	white-space: nowrap;
}

.tray_note {
	display: flex;
	align-items: center;
	justify-content: center;
	width: 34px;
}
```
